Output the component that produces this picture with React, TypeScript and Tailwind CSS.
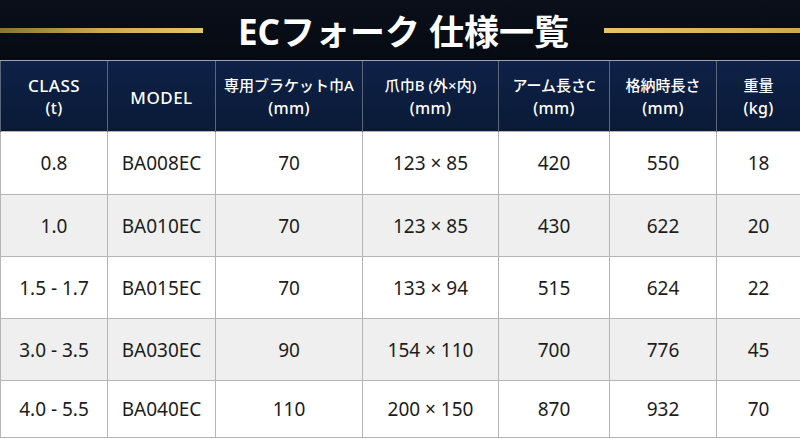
const FONT = { fontFamily: '"Noto Sans", "Noto Sans CJK JP", sans-serif' };

const COLS = [107, 108, 147, 136, 111, 107, 84];

// [1行目, 2行目, 1行目が英字だけか]
const HEAD: [string, string | null, boolean][] = [
  ["CLASS", "(t)", true],
  ["MODEL", null, true],
  ["専用ブラケット巾A", "(mm)", false],
  ["爪巾B (外×内)", "(mm)", false],
  ["アーム長さC", "(mm)", false],
  ["格納時長さ", "(mm)", false],
  ["重量", "(kg)", false],
];

const ROWS = [
  { h: "h-[63px]", cells: ["0.8", "BA008EC", "70", "123 × 85", "420", "550", "18"] },
  { h: "h-[62px]", cells: ["1.0", "BA010EC", "70", "123 × 85", "430", "622", "20"] },
  { h: "h-[62px]", cells: ["1.5 - 1.7", "BA015EC", "70", "133 × 94", "515", "624", "22"] },
  { h: "h-[62px]", cells: ["3.0 - 3.5", "BA030EC", "90", "154 × 110", "700", "776", "45"] },
  { h: "h-[57px]", cells: ["4.0 - 5.5", "BA040EC", "110", "200 × 150", "870", "932", "70"] },
];

export default function App() {
  return (
    <div className="w-[800px] h-[439px] overflow-hidden bg-white" style={FONT}>
      {/* タイトル */}
      <div className="h-[61px] flex items-center bg-gradient-to-b from-[#0a0f1a] to-[#060a12] border-b border-[#9aa3b0]">
        <div className="w-[203px] h-[5px] bg-gradient-to-r from-[#8a7434] via-[#c9ab52] to-[#e3c66c]" />
        <div className="flex-1 flex justify-center">
          <h1 className="text-[35px] font-bold text-white leading-none pt-[2px]">
            ECフォーク 仕様一覧
          </h1>
        </div>
        <div className="w-[196px] h-[5px] bg-gradient-to-r from-[#e3c66c] via-[#d6b85e] to-[#c9ab52]" />
      </div>

      <table className="table-fixed border-collapse w-[800px]">
        <colgroup>
          {COLS.map((w, i) => (
            <col key={i} style={{ width: w }} />
          ))}
        </colgroup>
        <thead>
          <tr className="h-[70px] bg-gradient-to-b from-[#0e2147] to-[#0a1a37]">
            {HEAD.map(([a, b, latin], i) => (
              <th
                key={i}
                className="border-x border-[#5d6678] text-white font-medium text-center align-middle pt-[3px]"
              >
                <div
                  className={
                    latin
                      ? "text-[17px] leading-[23px] tracking-[0.5px]"
                      : "text-[15px] leading-[23px]"
                  }
                >
                  {a}
                </div>
                {b && <div className="text-[16px] leading-[23px] tracking-[0.3px]">{b}</div>}
              </th>
            ))}
          </tr>
        </thead>
        <tbody>
          {ROWS.map((r, ri) => (
            <tr key={ri} className={`${r.h} ${ri % 2 === 1 ? "bg-[#efefef]" : "bg-white"}`}>
              {r.cells.map((c, ci) => (
                <td
                  key={ci}
                  className="border border-[#b5b5b5] text-center align-middle text-[19px] text-[#1c1c1c] pt-[2px]"
                >
                  {c}
                </td>
              ))}
            </tr>
          ))}
        </tbody>
      </table>
    </div>
  );
}
